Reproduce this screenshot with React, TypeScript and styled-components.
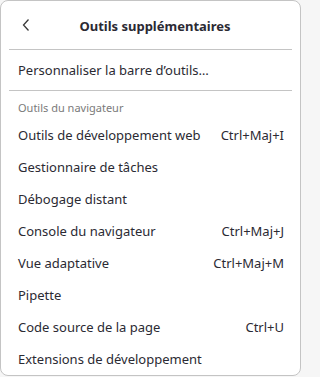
import React from "react";
import styled, { createGlobalStyle } from "styled-components";

const GlobalStyle = createGlobalStyle`
  html, body {
    margin: 0;
    padding: 0;
    background: #f6f6f6;
  }
  body {
    font-family: "Noto Sans", "Open Sans", sans-serif;
    color: #2b2a33;
  }
`;

interface Item {
  label: string;
  shortcut?: string;
}

const tools: Item[] = [
  { label: "Outils de développement web", shortcut: "Ctrl+Maj+I" },
  { label: "Gestionnaire de tâches" },
  { label: "Débogage distant" },
  { label: "Console du navigateur", shortcut: "Ctrl+Maj+J" },
  { label: "Vue adaptative", shortcut: "Ctrl+Maj+M" },
  { label: "Pipette" },
  { label: "Code source de la page", shortcut: "Ctrl+U" },
  { label: "Extensions de développement" },
];

function App() {
  return (
    <>
      <GlobalStyle />
      <Panel>
        <Header>
          <BackButton aria-label="Retour">
            <svg width="10" height="14" viewBox="0 0 10 14">
              <path d="M7.5 1.5 L2.5 7 L7.5 12.5" fill="none" stroke="#3a3a3a" strokeWidth="1.3" />
            </svg>
          </BackButton>
          <Title>Outils supplémentaires</Title>
        </Header>
        <Separator />
        <Row $tall>
          <Label>Personnaliser la barre d’outils…</Label>
        </Row>
        <Separator />
        <SectionTitle>Outils du navigateur</SectionTitle>
        {tools.map((t) => (
          <Row key={t.label}>
            <Label>{t.label}</Label>
            {t.shortcut && <Shortcut>{t.shortcut}</Shortcut>}
          </Row>
        ))}
      </Panel>
    </>
  );
}

const Panel = styled.div`
  box-sizing: border-box;
  width: 301px;
  height: 376px;
  background: #ffffff;
  border: 1px solid #c4c4c4;
  border-radius: 8px;
  display: flex;
  flex-direction: column;
  padding: 0 8px;
  overflow: hidden;
`;

const Header = styled.div`
  height: 48px;
  display: flex;
  align-items: center;
  justify-content: center;
  padding: 1px 0 0 9px;
  box-sizing: border-box;
  position: relative;
  flex-shrink: 0;
`;

const BackButton = styled.button`
  position: absolute;
  left: 7px;
  top: 14px;
  width: 20px;
  height: 20px;
  border: none;
  background: none;
  padding: 0;
  display: flex;
  align-items: center;
  justify-content: center;
`;

const Title = styled.h1`
  margin: 0;
  font-size: 13px;
  font-weight: 700;
  color: #2b2a33;
`;

const Separator = styled.hr`
  margin: 0;
  border: none;
  border-top: 1px solid #c4c4c4;
  flex-shrink: 0;
`;

const Row = styled.div<{ $tall?: boolean }>`
  height: ${(p) => (p.$tall ? "40px" : "32px")};
  display: flex;
  align-items: center;
  justify-content: space-between;
  padding: 0 8px 0 9px;
  font-size: 13px;
  flex-shrink: 0;
`;

const Label = styled.span`
  white-space: nowrap;
`;

const Shortcut = styled.span`
  white-space: nowrap;
`;

const SectionTitle = styled.div`
  height: 28px;
  box-sizing: border-box;
  display: flex;
  align-items: center;
  padding: 4px 9px 0;
  font-size: 11px;
  color: #7a7a7a;
  flex-shrink: 0;
`;

export default App;
